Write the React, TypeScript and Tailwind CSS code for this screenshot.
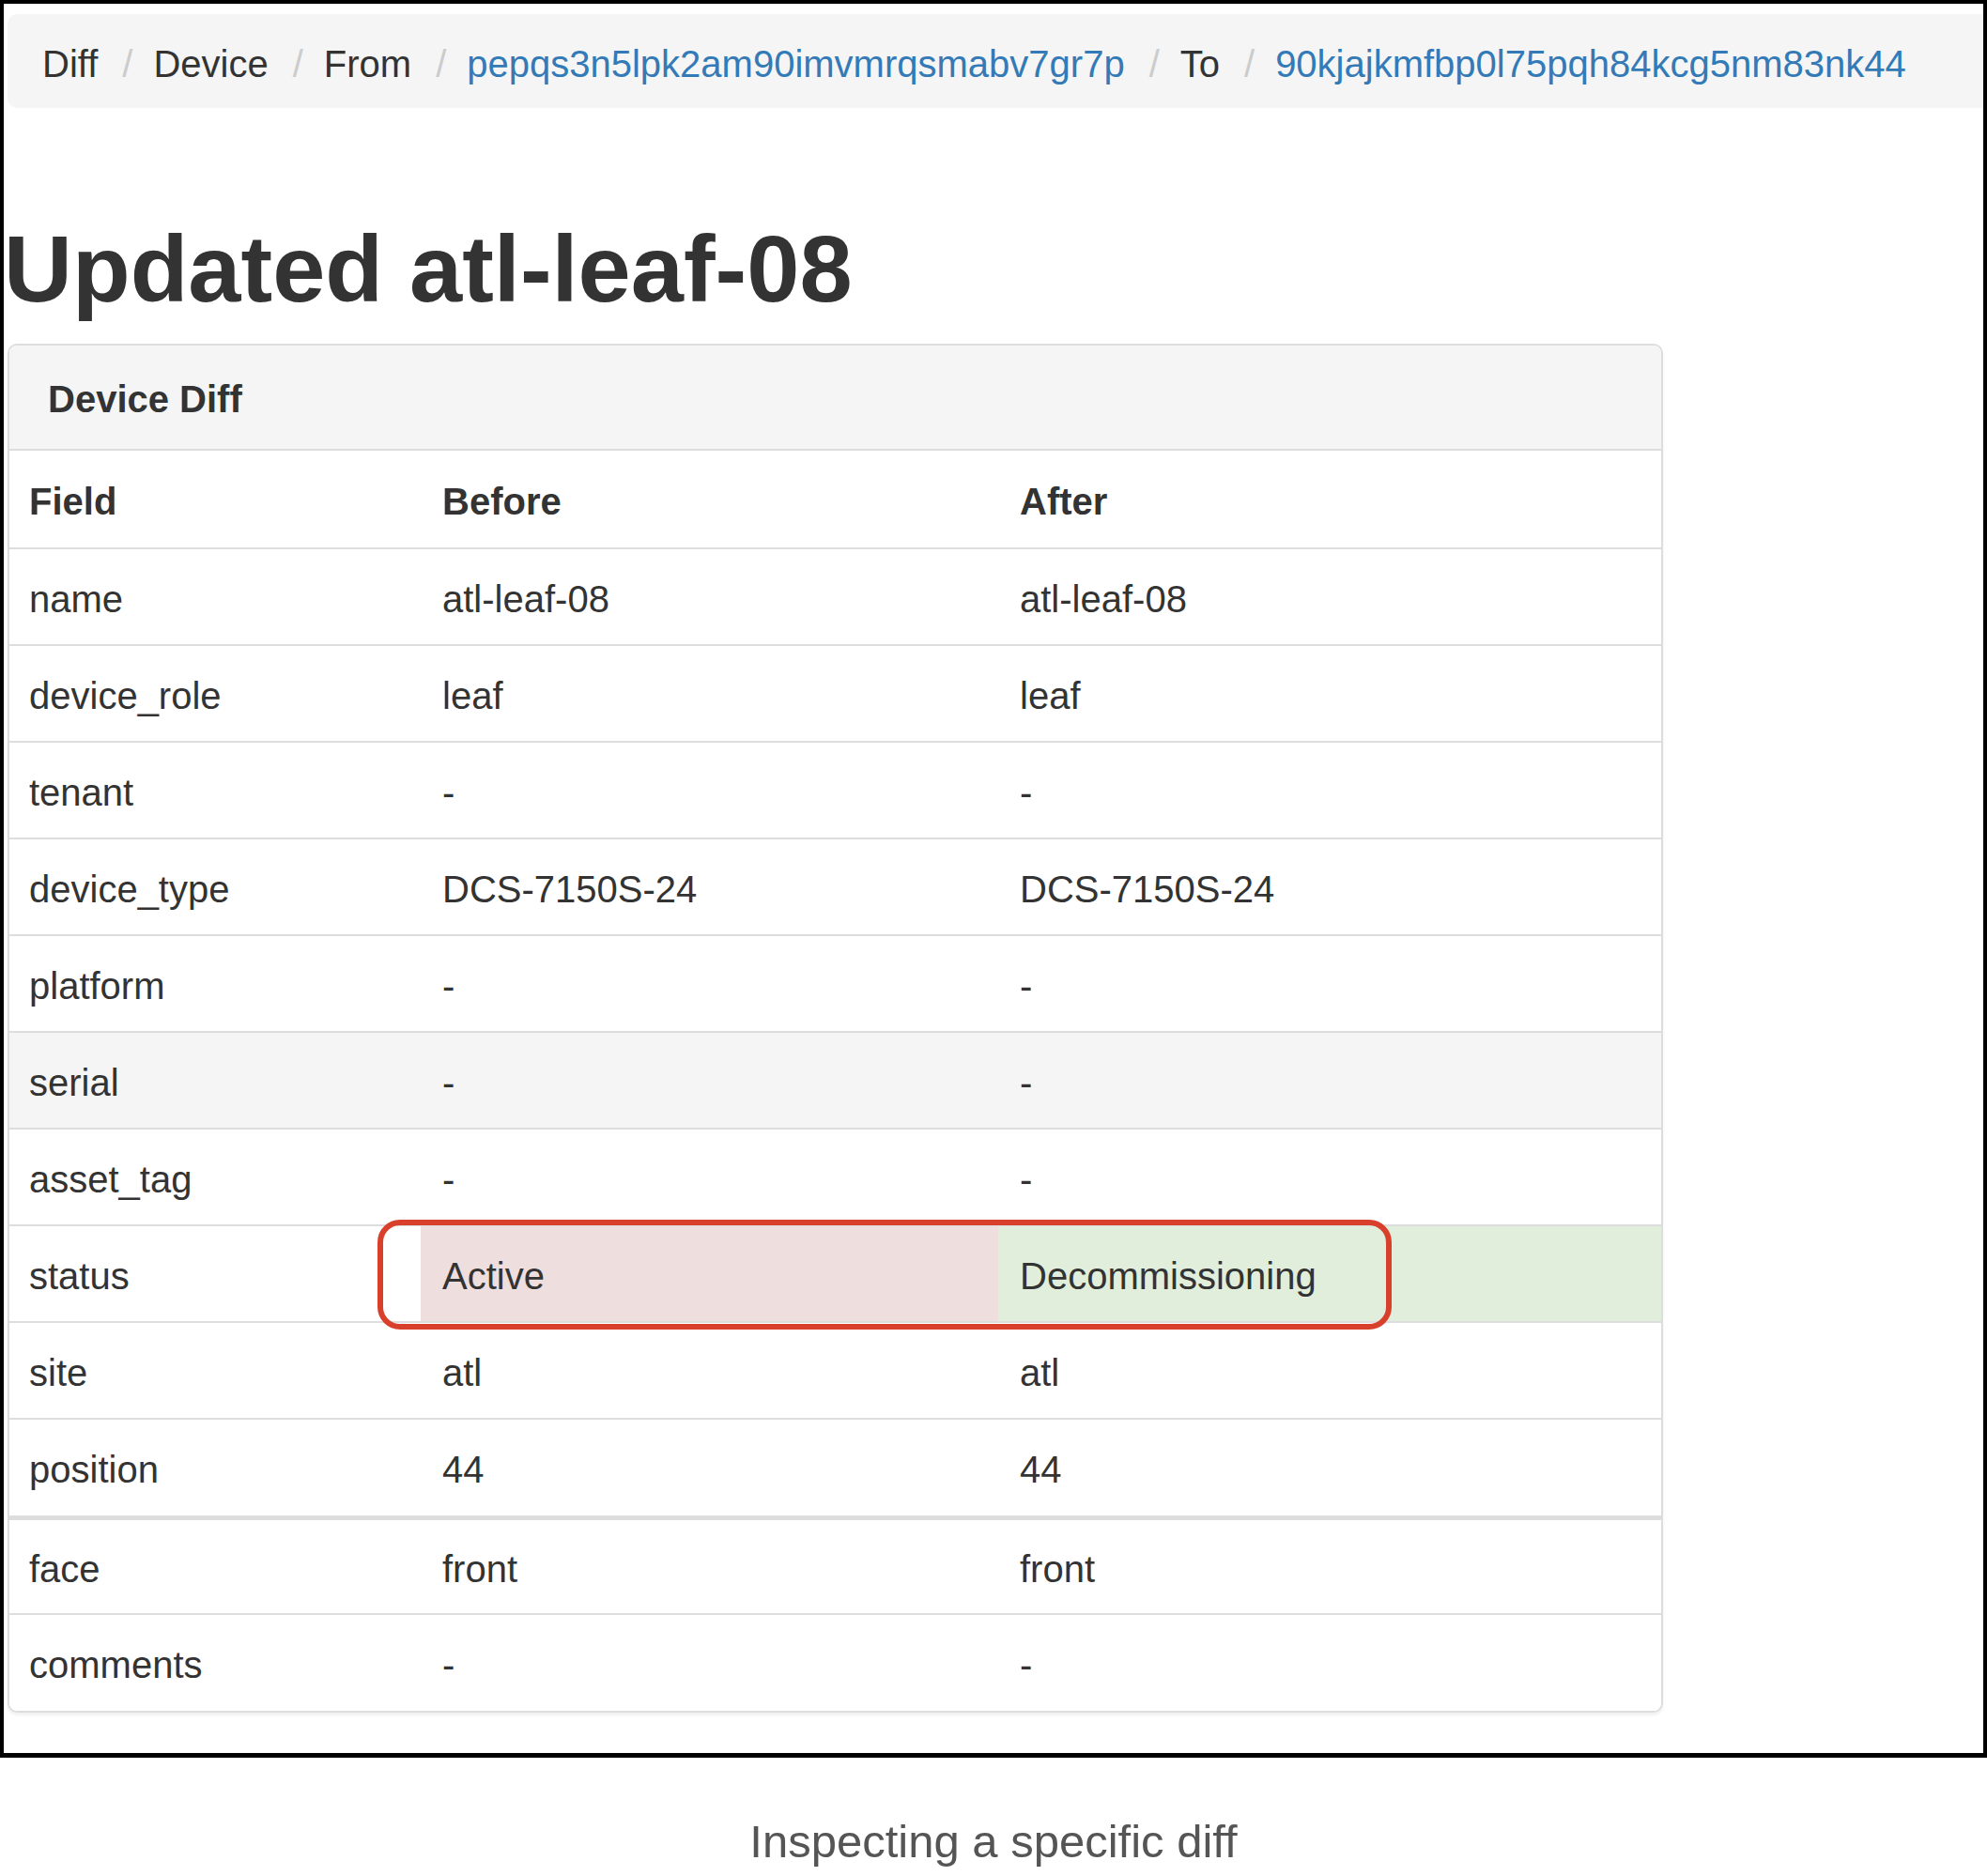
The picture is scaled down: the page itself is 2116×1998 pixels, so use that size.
const bodyRows: [string, string, string][] = [
  ["name", "atl-leaf-08", "atl-leaf-08"],
  ["device_role", "leaf", "leaf"],
  ["tenant", "-", "-"],
  ["device_type", "DCS-7150S-24", "DCS-7150S-24"],
  ["platform", "-", "-"],
  ["serial", "-", "-"],
  ["asset_tag", "-", "-"],
  ["status", "Active", "Decommissioning"],
  ["site", "atl", "atl"],
  ["position", "44", "44"],
];

const tailRows: [string, string, string][] = [
  ["face", "front", "front"],
  ["comments", "-", "-"],
];

const Sep = () => <span className="ml-[26px] mr-[22px] text-[#cccccc]">/</span>;

const Row = ({
  cells,
  bold = false,
  className = "",
}: {
  cells: [string, string, string];
  bold?: boolean;
  className?: string;
}) => {
  const isStatus = cells[0] === "status";
  const isSerial = cells[0] === "serial";
  return (
    <div
      className={`relative grid grid-cols-[438px_615px_1fr] ${
        isSerial ? "bg-[#f5f5f5]" : "bg-white"
      } ${bold ? "font-bold" : ""} ${className}`}
    >
      <div className="flex items-center pl-[21px] pt-[4px]">{cells[0]}</div>
      <div className={`flex items-center pl-[23px] pt-[4px] ${isStatus ? "bg-[#eedede]" : ""}`}>{cells[1]}</div>
      <div className={`flex items-center pl-[23px] pt-[4px] ${isStatus ? "bg-[#e0eedb]" : ""}`}>{cells[2]}</div>
      {isStatus && (
        <div className="absolute left-[392px] top-[-7px] z-10 h-[117px] w-[1080px] rounded-[24px] border-[6px] border-[#d8402c]" />
      )}
    </div>
  );
};

export default function App() {
  return (
    <div className="w-[2116px] min-h-[1998px] bg-white font-['Liberation_Sans',Arial,sans-serif] text-[#333333]">
      <div className="h-[1872px] border-[4px] border-b-[5px] border-black">
        {/* breadcrumb */}
        <div className="ml-[4px] mt-[11px] flex h-[100px] items-center rounded-l-[10px] bg-[#f5f5f5] pl-[37px] pt-[5px] text-[40px]">
          <span>Diff</span>
          <Sep />
          <span>Device</span>
          <Sep />
          <span>From</span>
          <Sep />
          <span className="text-[#337ab7]">pepqs3n5lpk2am90imvmrqsmabv7gr7p</span>
          <Sep />
          <span>To</span>
          <Sep />
          <span className="text-[#337ab7]">90kjajkmfbp0l75pqh84kcg5nm83nk44</span>
        </div>

        <h1 className="mt-[116px] text-[101px] font-bold leading-[110px]">Updated atl-leaf-08</h1>

        {/* panel */}
        <div className="ml-[4px] mt-[25px] w-[1763px] rounded-[10px] border-2 border-[#dddddd] text-[40px] shadow-[0_3px_3px_rgba(0,0,0,0.06)]">
          <div className="flex h-[112px] items-center rounded-t-[8px] border-b-2 border-[#dddddd] bg-[#f5f5f5] pl-[41px] pt-[3px] font-bold">
            Device Diff
          </div>
          <Row cells={["Field", "Before", "After"]} bold className="h-[105px] border-b-2 border-[#dddddd]" />
          {bodyRows.map((r, i) => (
            <Row
              key={r[0]}
              cells={r}
              className={
                i === bodyRows.length - 1
                  ? "h-[107px] border-b-[5px] border-[#dddddd]"
                  : "h-[103px] border-b-2 border-[#dddddd]"
              }
            />
          ))}
          {tailRows.map((r, i) => (
            <Row
              key={r[0]}
              cells={r}
              className={
                i === tailRows.length - 1
                  ? "h-[102px] rounded-b-[8px]"
                  : "h-[101px] border-b-2 border-[#dddddd]"
              }
            />
          ))}
        </div>
      </div>

      <div className="mt-[61px] text-center text-[49px] leading-[56px] text-[#555555]">Inspecting a specific diff</div>
    </div>
  );
}
